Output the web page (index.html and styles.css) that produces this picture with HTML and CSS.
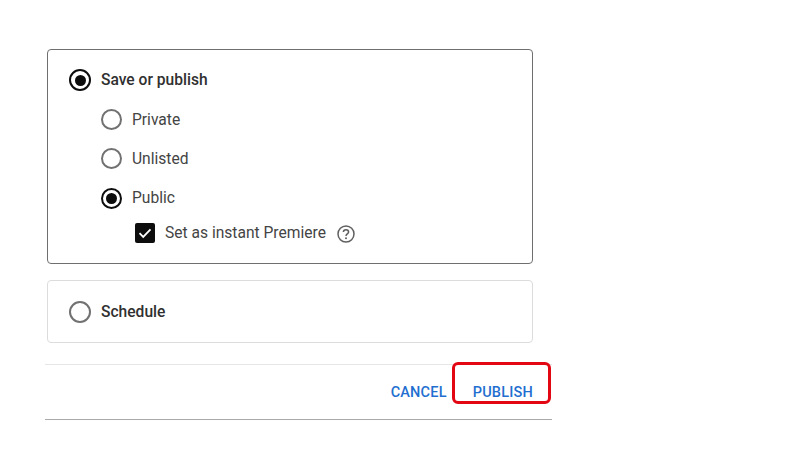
FILE: index.html
```html
<!DOCTYPE html>
<html lang="en">

<head>
    <meta charset="UTF-8">
    <meta name="viewport" content="width=device-width, initial-scale=1.0">
    <title>Visibility</title>
    <link rel="stylesheet" href="styles.css">
</head>

<body>
    <div id="panel">

        <div class="card" id="publishCard">
            <div class="row topRow">
                <span class="radio selected"></span>
                <span class="title">Save or publish</span>
            </div>
            <div class="row subRow">
                <span class="radio"></span>
                <span class="label">Private</span>
            </div>
            <div class="row subRow">
                <span class="radio"></span>
                <span class="label">Unlisted</span>
            </div>
            <div class="row subRow">
                <span class="radio selected"></span>
                <span class="label">Public</span>
            </div>
            <div class="row checkRow">
                <span class="checkbox">
                    <svg width="20" height="20" viewBox="0 0 20 20">
                        <path d="M4.5 10.2l3.7 3.7 7.3-7.6" fill="none" stroke="#fff" stroke-width="1.8" />
                    </svg>
                </span>
                <span class="label">Set as instant Premiere</span>
                <svg class="help" width="20" height="20" viewBox="0 0 20 20">
                    <circle cx="10" cy="10" r="8" fill="none" stroke="#606060" stroke-width="1.5" />
                    <path d="M7.4 8.1c0-1.5 1.2-2.4 2.6-2.4s2.6.9 2.6 2.3c0 1.9-2.6 2-2.6 4" fill="none" stroke="#606060" stroke-width="1.5" />
                    <circle cx="10" cy="14.2" r="1" fill="#606060" />
                </svg>
            </div>
        </div>

        <div class="card" id="scheduleCard">
            <div class="row">
                <span class="radio bigRadio"></span>
                <span class="title">Schedule</span>
            </div>
        </div>

        <div id="footer">
            <button>Cancel</button>
            <button>Publish</button>
            <!-- red box drawn over the publish button -->
            <div id="highlight"></div>
        </div>

    </div>
</body>

</html>
```

FILE: styles.css
```css
body {
    margin: 0;
    background-color: white;
    color: #444444;
    font-family: Roboto, "Liberation Sans", sans-serif;
    font-size: 15.6px;
}

#panel {
    width: 507px;
    margin-left: 45px;
    padding-top: 49px;
}

.card {
    box-sizing: border-box;
    width: 486px;
    margin-left: 2px;
    border-radius: 4px;
}

#publishCard {
    height: 215px;
    padding: 19px 21px 0;
    border: 1px solid #6f6f6f;
}

#scheduleCard {
    height: 63px;
    margin-top: 16px;
    padding: 0 21px;
    display: flex;
    align-items: center;
    border: 1px solid #dcdcdc;
}

.row {
    display: flex;
    align-items: center;
}

.topRow {
    height: 22px;
}

.subRow {
    height: 21px;
    margin-top: 18.2px;
    margin-left: 32px;
}

.checkRow {
    margin-top: 14.4px;
    margin-left: 66px;
    height: 20px;
}

.title {
    font-weight: 500;
    color: #303030;
}

.radio {
    box-sizing: border-box;
    width: 21px;
    height: 21px;
    margin-right: 10px;
    border: 2px solid #717171;
    border-radius: 50%;
    display: flex;
    align-items: center;
    justify-content: center;
}

.bigRadio,
.topRow .radio {
    width: 22px;
    height: 22px;
}

.radio.selected {
    border-color: #0d0d0d;
}

.radio.selected::after {
    content: "";
    width: 11px;
    height: 11px;
    border-radius: 50%;
    background-color: #0d0d0d;
}

.checkbox {
    width: 20px;
    height: 20px;
    margin-right: 10px;
    border-radius: 2px;
    background-color: #0d0d0d;
}

.checkbox svg {
    display: block;
}

.help {
    margin-left: 10px;
    margin-top: 2px;
}

#footer {
    position: relative;
    box-sizing: border-box;
    height: 56px;
    margin-top: 21px;
    padding-top: 19px;
    display: flex;
    justify-content: flex-end;
    align-items: flex-start;
    border-top: 1px solid #e6e6e6;
    border-bottom: 1px solid #aaaaaa;
}

#footer button {
    padding: 0;
    margin-right: 19px;
    border: none;
    background-color: transparent;
    color: #1f6fd0;
    font-family: Roboto, "Liberation Sans", sans-serif;
    font-size: 14.5px;
    font-weight: 500;
    letter-spacing: 0.2px;
    text-transform: uppercase;
}

#footer button:hover {
    cursor: pointer;
}

#footer button:first-child {
    margin-right: 26px;
}

#highlight {
    position: absolute;
    top: -3px;
    right: 1px;
    box-sizing: border-box;
    width: 99px;
    height: 42px;
    border: 3px solid #e30613;
    border-radius: 6px;
}
```
